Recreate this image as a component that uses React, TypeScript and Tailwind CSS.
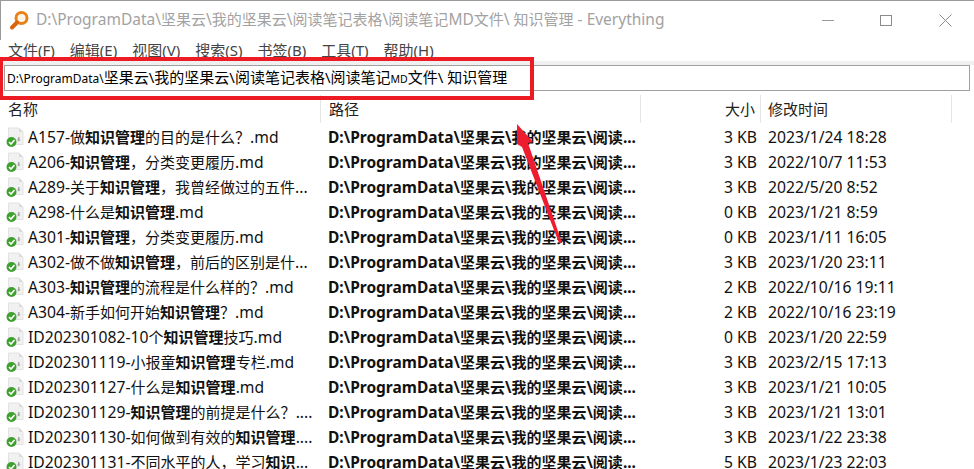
import { Fragment } from "react";

const rows: [string, string, string, string, string][] = [
  ["A157-做", "知识管理", "的目的是什么？.md", "3 KB", "2023/1/24 18:28"],
  ["A206-", "知识管理", "，分类变更履历.md", "3 KB", "2022/10/7 11:53"],
  ["A289-关于", "知识管理", "，我曾经做过的五件...", "3 KB", "2022/5/20 8:52"],
  ["A298-什么是", "知识管理", ".md", "0 KB", "2023/1/21 8:59"],
  ["A301-", "知识管理", "，分类变更履历.md", "0 KB", "2023/1/11 16:05"],
  ["A302-做不做", "知识管理", "，前后的区别是什...", "3 KB", "2023/1/20 23:11"],
  ["A303-", "知识管理", "的流程是什么样的？.md", "2 KB", "2022/10/16 19:11"],
  ["A304-新手如何开始", "知识管理", "？.md", "2 KB", "2022/10/16 23:19"],
  ["ID202301082-10个", "知识管理", "技巧.md", "0 KB", "2023/1/20 22:59"],
  ["ID202301119-小报童", "知识管理", "专栏.md", "3 KB", "2023/2/15 17:13"],
  ["ID202301127-什么是", "知识管理", ".md", "3 KB", "2023/1/21 10:05"],
  ["ID202301129-", "知识管理", "的前提是什么？....", "3 KB", "2023/1/21 13:01"],
  ["ID202301130-如何做到有效的", "知识管理", "....", "3 KB", "2023/1/22 23:38"],
  ["ID202301131-不同水平的人，学习", "知识", "...", "5 KB", "2023/1/23 22:03"],
];

function Mixed({ text }: { text: string }) {
  const parts = text.split(/([\u2E80-\u9FFF\uFF00-\uFFEF]+)/).filter(Boolean);
  return (
    <>
      {parts.map((p, i) =>
        /[\u2E80-\u9FFF\uFF00-\uFFEF]/.test(p) ? (
          <span key={i} className="text-[15px]">{p}</span>
        ) : (
          <Fragment key={i}>{p}</Fragment>
        ),
      )}
    </>
  );
}

function FileIcon() {
  return (
    <svg width="20" height="20" viewBox="0 0 20 20" className="shrink-0">
      <path d="M3.500 1h10.500l4 4v12.500h-14.500z" fill="#f1f1f1" stroke="#e2e2e2" />
      <path d="M14 1v4h4" fill="#dcdcdc" />
      <path d="M13 10h1.500v2.500h1.200l-2 2-2-2h1.300z" fill="#a8a8a8" />
      <circle cx="6.500" cy="15" r="5" fill="#3f9f2f" />
      <path d="M4 15l2 2 3.500-4" fill="none" stroke="#ffffff" strokeWidth="1.600" />
    </svg>
  );
}

function Logo() {
  return (
    <svg width="22" height="22" viewBox="0 0 22 22">
      <circle cx="12.500" cy="8" r="5.500" fill="#fff6e8" stroke="#e8811a" strokeWidth="3" />
      <path d="M8 12.500L3 17.500" stroke="#d9660f" strokeWidth="4" strokeLinecap="round" />
    </svg>
  );
}

export default function App() {
  const font = "font-['Noto_Sans','Noto_Sans_CJK_SC',sans-serif]";
  return (
    <div className={`relative h-[469px] w-[974px] overflow-hidden bg-white ${font} text-[15.500px] text-[#111111]`}>
      <div className="flex h-[40px] items-center border-t border-l border-[#9a9a9a] pl-[8px]">
        <Logo />
        <span className="ml-[5px] pb-[2px] whitespace-nowrap text-[#a2a2a2]">
          <Mixed text="D:\ProgramData\坚果云\我的坚果云\阅读笔记表格\阅读笔记MD文件\ 知识管理 - Everything" />
        </span>
        <div className="ml-auto flex h-full items-center">
          <div className="h-px w-[12px] bg-[#9a9a9a]" />
          <div className="ml-[46px] h-[11px] w-[12px] border border-[#8c8c8c]" />
          <svg width="13" height="13" viewBox="0 0 13 13" className="mr-[22px] ml-[47px]">
            <path d="M0.500 0.500l12 12M12.500 0.500l-12 12" stroke="#8c8c8c" fill="none" />
          </svg>
        </div>
      </div>
      <div className="flex h-[21px] items-center gap-[15px] pl-[8px] text-[15px] leading-none text-[#444444]">
        <span>文件(F)</span>
        <span>编辑(E)</span>
        <span>视图(V)</span>
        <span>搜索(S)</span>
        <span>书签(B)</span>
        <span>工具(T)</span>
        <span>帮助(H)</span>
      </div>
      <div className="h-[4px] bg-[#f0f0f0]" />
      <div className="ml-[4px] flex h-[26px] w-[966px] items-center border border-[#a0a0a0] pb-[1px] pl-[2px] text-[15px] whitespace-nowrap text-black">
        <span>
          <span className="text-[12px]">D:\ProgramData\</span>
          坚果云\我的坚果云\阅读笔记表格\阅读笔记
          <span className="text-[10.500px]">MD</span>
          文件\ 知识管理
        </span>
      </div>
      <div className="mt-[4px] flex h-[30px] items-center pb-[2px] text-[15px] text-[#222222]">
        <div className="flex h-full w-[321px] items-center border-r border-[#e5e5e5] pl-[8px]">名称</div>
        <div className="flex h-full w-[320px] items-center border-r border-[#e5e5e5] pl-[8px]">路径</div>
        <div className="flex h-full w-[120px] items-center justify-end border-r border-[#e5e5e5] pr-[5px]">大小</div>
        <div className="flex h-full w-[191px] items-center border-r border-[#e5e5e5] pl-[7px]">修改时间</div>
      </div>
      <div className="flex flex-col text-[15.700px]">
        {rows.map((r) => (
          <div key={r[0] + r[4]} className="flex h-[25px] shrink-0 items-center whitespace-nowrap">
            <div className="flex w-[321px] items-center pl-[5px]">
              <FileIcon />
              <span className="ml-[3px]">
                <Mixed text={r[0]} />
                <b className="font-bold"><Mixed text={r[1]} /></b>
                <Mixed text={r[2]} />
              </span>
            </div>
            <div className="w-[320px] pl-[7px] text-[15.500px] font-bold">
              <Mixed text="D:\ProgramData\坚果云\我的坚果云\阅读..." />
            </div>
            <div className="w-[120px] pr-[4px] text-right">{r[3]}</div>
            <div className="pl-[7px]">{r[4]}</div>
          </div>
        ))}
      </div>
      <div className="absolute top-[57px] left-[-1px] h-[43px] w-[535px] border-4 border-[#ed1c24]" />
      <svg width="60" height="130" viewBox="0 0 60 130" className="absolute top-[122px] left-[510px]">
        <path d="M7 2L23 20L18 21L52 121L49 121L12 25L7 22Z" fill="#ed1c2e" />
      </svg>
    </div>
  );
}
